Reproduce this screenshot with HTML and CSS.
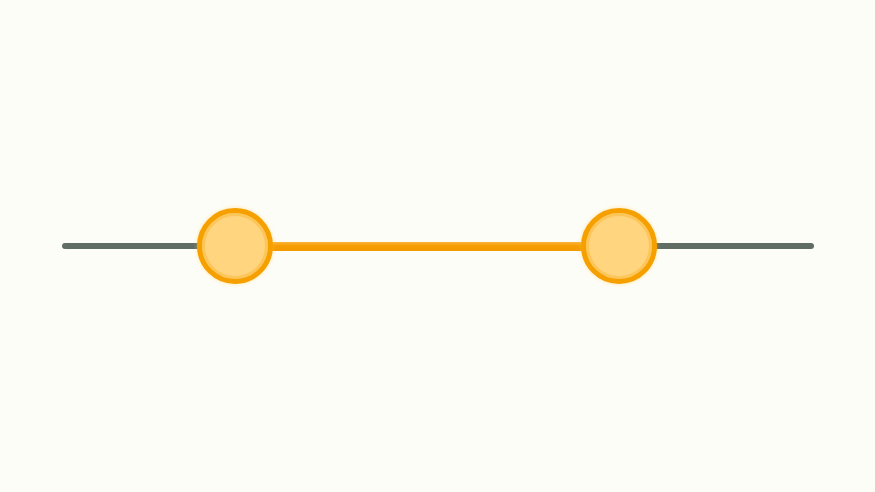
FILE: index.html
```html
<!DOCTYPE html>
<html lang="en">
<head>
  <meta charset="UTF-8" /><meta name="viewport" content="width=device-width,initial-scale=1">
  <title>Range slider</title>
  <link rel="stylesheet" href="styles.css">
</head>
<body>
  <div class="stage">
    <div class="slider">
      <span class="rail rail-left"></span>
      <span class="thumb"></span>
      <span class="fill"></span>
      <span class="thumb"></span>
      <span class="rail rail-right"></span>
    </div>
  </div>
</body>
</html>
```

FILE: styles.css
```css
* { box-sizing: border-box; }
body {
  margin: 0;
  background: #fdfdf8;
  font-family: "Liberation Sans", sans-serif;
}
.stage {
  height: 492px;
  display: flex;
  align-items: center;
  padding: 0 0 0 62px;
}
.slider {
  display: flex;
  align-items: center;
  width: 752px;
}
.rail {
  height: 6px;
  background: #5f6d64;
}
.rail-left { width: 136px; border-radius: 3px 0 0 3px; margin-right: -1px; }
.rail-right { flex: 1; border-radius: 0 3px 3px 0; margin-left: -1px; }
.fill {
  width: 310px;
  height: 9px;
  margin: 0 -1px;
  background: linear-gradient(to bottom, #fbb43a 0, #f59d00 45%, #f29a00 100%);
}
.thumb {
  width: 76px;
  height: 76px;
  flex: none;
  border-radius: 50%;
  border: 5px solid #f6a000;
  background: #ffd57f;
  box-shadow: inset 0 0 0 3px #fdc65a, 0 0 4px rgba(255, 200, 60, 0.45);
  position: relative;
  z-index: 1;
}
```
